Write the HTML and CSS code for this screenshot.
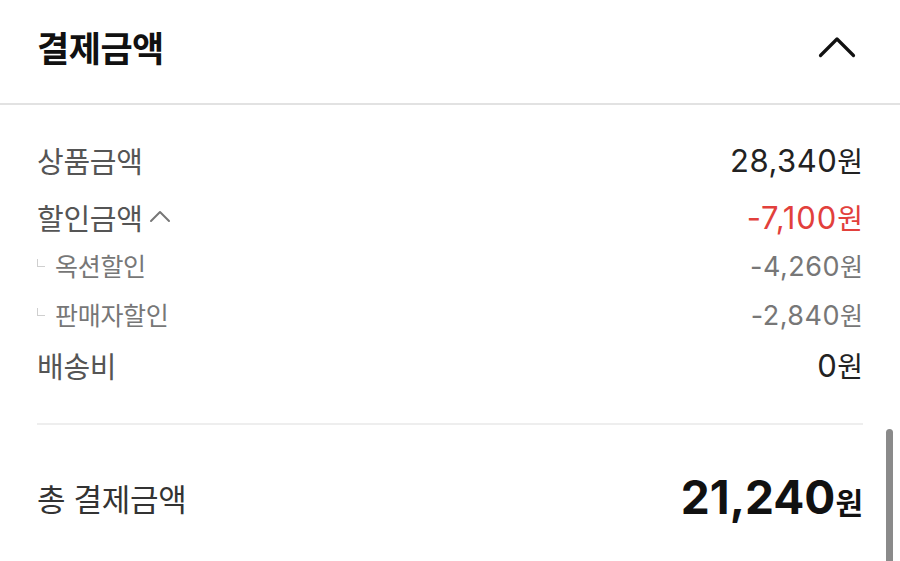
FILE: index.html
```html
<!DOCTYPE html>
<html lang="ko">
<head>
<meta charset="utf-8">
<link rel="stylesheet" href="styles.css">
</head>
<body>
<div class="panel">
  <header class="head">
    <h2 class="title">결제금액</h2>
    <svg class="toggle" width="38" height="22" viewBox="0 0 38 22"><path d="M2.5 19.5 L19 3 L35.5 19.5" fill="none" stroke="#111" stroke-width="3.2" stroke-linecap="round" stroke-linejoin="round"/></svg>
  </header>
  <section class="body">
    <div class="row main">
      <span class="label">상품금액</span>
      <span class="val">28,340<span class="won">원</span></span>
    </div>
    <div class="row main gap">
      <span class="label">할인금액<svg class="mini" width="22" height="14" viewBox="0 0 22 14"><path d="M2 12 L11 3 L20 12" fill="none" stroke="#777" stroke-width="2" stroke-linecap="round" stroke-linejoin="round"/></svg></span>
      <span class="val red">-7,100<span class="won">원</span></span>
    </div>
    <div class="row sub first">
      <span class="label"><span class="tick"></span>옥션할인</span>
      <span class="val">-4,260<span class="won">원</span></span>
    </div>
    <div class="row sub">
      <span class="label"><span class="tick"></span>판매자할인</span>
      <span class="val">-2,840<span class="won">원</span></span>
    </div>
    <div class="row main ship">
      <span class="label">배송비</span>
      <span class="val">0<span class="won">원</span></span>
    </div>
    <div class="divider"></div>
    <div class="row total">
      <span class="label">총 결제금액</span>
      <span class="val">21,240<span class="won">원</span></span>
    </div>
  </section>
  <div class="scrollbar"></div>
</div>
</body>
</html>
```
FILE: styles.css
```css
* { box-sizing: border-box; }
html, body { margin: 0; padding: 0; background: #fff; }
body {
  font-family: "Noto Sans CJK KR", "Noto Sans", sans-serif;
  width: 900px;
  height: 561px;
  overflow: hidden;
}
.panel { position: relative; height: 561px; }
.head {
  height: 105px;
  display: flex;
  align-items: center;
  justify-content: space-between;
  padding: 0 44px 10px 37px;
  border-bottom: 2px solid #e2e2e2;
}
.title {
  margin: 0;
  font-size: 35px;
  font-weight: 700;
  color: #111;
  letter-spacing: -0.5px;
}
.toggle { display: block; }
.body { padding: 35px 37px 0 37px; }
.row {
  display: flex;
  justify-content: space-between;
  align-items: center;
}
.row.main { height: 40px; }
.row.main.gap { margin-top: 17px; }
.row.sub { height: 34px; margin-top: 15px; }
.row.sub.first { margin-top: 11px; }
.row.main.ship { margin-top: 14px; }
.label {
  display: flex;
  align-items: center;
  font-size: 29px;
  color: #555;
  letter-spacing: -0.3px;
}
.val {
  font-family: Inter, "Noto Sans CJK KR", sans-serif;
  font-size: 31px;
  color: #222;
  letter-spacing: 0.5px;
}
.won { font-family: "Noto Sans CJK KR", sans-serif; font-size: 28px; letter-spacing: 0; }
.val.red { color: #e2403c; letter-spacing: 0.9px; }
.row.sub .label { font-size: 25px; color: #777; }
.row.sub .val { font-size: 27px; color: #777; }
.row.sub .won { font-size: 25px; }
.tick {
  display: block;
  width: 8px;
  height: 8px;
  border-left: 1.5px solid #cfcfcf;
  border-bottom: 1.5px solid #cfcfcf;
  margin: 0 10px 0 0;
  transform: translateY(-2px);
}
.mini { margin-left: 6px; margin-top: -2px; }
.divider {
  height: 2px;
  background: #eeeeee;
  margin-top: 38px;
}
.row.total { height: 60px; margin-top: 42px; }
.row.total .label { font-size: 31px; color: #333; }
.row.total .val {
  font-size: 46px;
  font-weight: 700;
  color: #111;
  letter-spacing: 0;
}
.row.total .won { font-size: 30px; font-weight: 700; }
.scrollbar {
  position: absolute;
  left: 886px;
  top: 429px;
  width: 7px;
  height: 140px;
  border-radius: 4px;
  background: #8a8a8a;
}
```
